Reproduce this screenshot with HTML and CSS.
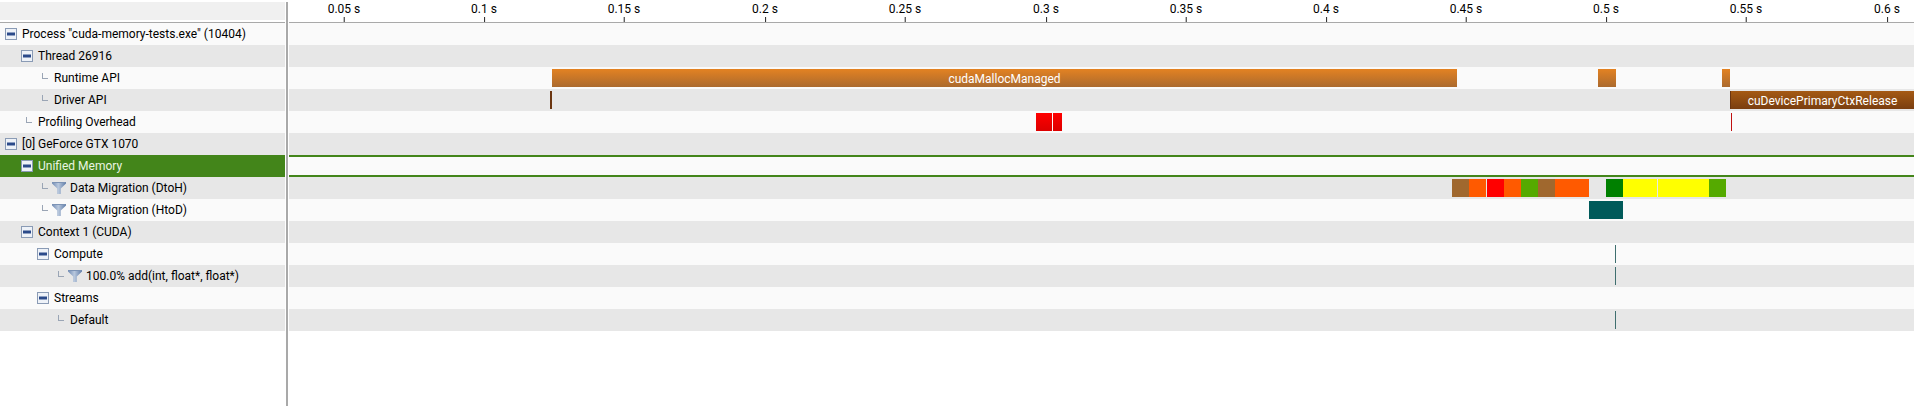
FILE: index.html
```html
<!DOCTYPE html>
<html lang="en">
<head>
<meta charset="utf-8">
<title>Timeline</title>
<link rel="stylesheet" href="styles.css">
</head>
<body>
<svg class="defs" width="0" height="0" aria-hidden="true">
  <defs>
    <linearGradient id="fgrad" x1="0" x2="1" y1="0" y2="0">
      <stop offset="0" stop-color="#6f8ab3"/>
      <stop offset="0.45" stop-color="#b9c8dd"/>
      <stop offset="1" stop-color="#5f7ca8"/>
    </linearGradient>
    <symbol id="minus" viewBox="0 0 12 12">
      <rect x="0.5" y="0.5" width="11" height="11" fill="#eef2f8" stroke="#8a9bb5"/>
      <rect x="2" y="4.5" width="8" height="3" fill="#2b4a8a"/>
    </symbol>
    <symbol id="funnel" viewBox="0 0 14 12">
      <path d="M0 0H14V1.5L8.8 6.5V12H5.2V6.5L0 1.5Z" fill="url(#fgrad)"/>
      <path d="M0.5 0.5H13.5" stroke="#7c93b5" stroke-width="1"/>
    </symbol>
  </defs>
</svg>
<div class="app">
  <div class="side">
    <div class="side-head"><div class="side-fill"></div></div>
    <div class="row odd"><span class="in0"></span><svg class="minus"><use href="#minus"/></svg><span class="lbl">Process "cuda-memory-tests.exe" (10404)</span></div>
    <div class="row even"><span class="in1"></span><svg class="minus"><use href="#minus"/></svg><span class="lbl">Thread 26916</span></div>
    <div class="row odd"><span class="in2"></span><span class="elbow"></span><span class="lbl">Runtime API</span></div>
    <div class="row even"><span class="in2"></span><span class="elbow"></span><span class="lbl">Driver API</span></div>
    <div class="row odd"><span class="in1"></span><span class="elbow"></span><span class="lbl">Profiling Overhead</span></div>
    <div class="row even"><span class="in0"></span><svg class="minus"><use href="#minus"/></svg><span class="lbl">[0] GeForce GTX 1070</span></div>
    <div class="row sel"><span class="in1"></span><svg class="minus"><use href="#minus"/></svg><span class="lbl">Unified Memory</span></div>
    <div class="row even"><span class="in2"></span><span class="elbow"></span><svg class="funnel"><use href="#funnel"/></svg><span class="lbl">Data Migration (DtoH)</span></div>
    <div class="row odd"><span class="in2"></span><span class="elbow"></span><svg class="funnel"><use href="#funnel"/></svg><span class="lbl">Data Migration (HtoD)</span></div>
    <div class="row even"><span class="in1"></span><svg class="minus"><use href="#minus"/></svg><span class="lbl">Context 1 (CUDA)</span></div>
    <div class="row odd"><span class="in2"></span><svg class="minus"><use href="#minus"/></svg><span class="lbl">Compute</span></div>
    <div class="row even"><span class="in3"></span><span class="elbow"></span><svg class="funnel"><use href="#funnel"/></svg><span class="lbl">100.0% add(int, float*, float*)</span></div>
    <div class="row odd"><span class="in2"></span><svg class="minus"><use href="#minus"/></svg><span class="lbl">Streams</span></div>
    <div class="row even"><span class="in3"></span><span class="elbow"></span><span class="lbl">Default</span></div>
  </div>
  <div class="divider"></div>
  <div class="main">
    <div class="ruler">
      <span class="tick" style="left:55px">0.05 s</span>
      <span class="tick" style="left:195px">0.1 s</span>
      <span class="tick" style="left:335px">0.15 s</span>
      <span class="tick" style="left:476px">0.2 s</span>
      <span class="tick" style="left:616px">0.25 s</span>
      <span class="tick" style="left:757px">0.3 s</span>
      <span class="tick" style="left:897px">0.35 s</span>
      <span class="tick" style="left:1037px">0.4 s</span>
      <span class="tick" style="left:1177px">0.45 s</span>
      <span class="tick" style="left:1317px">0.5 s</span>
      <span class="tick" style="left:1457px">0.55 s</span>
      <span class="tick" style="left:1598px">0.6 s</span>
    </div>
    <div class="track odd"></div>
    <div class="track even"></div>
    <div class="track odd">
      <span class="bar api" style="left:263px;width:905px">cudaMallocManaged</span>
      <span class="bar api" style="left:1309px;width:18px"></span>
      <span class="bar api" style="left:1433px;width:8px"></span>
    </div>
    <div class="track even">
      <span class="bar dark" style="left:261px;width:2px"></span>
      <span class="bar drv" style="left:1441px;width:184px">cuDevicePrimaryCtxRelease</span>
    </div>
    <div class="track odd">
      <span class="bar red" style="left:747px;width:16px"></span>
      <span class="bar red" style="left:764px;width:9px"></span>
      <span class="bar thin" style="left:1442px;width:1px"></span>
    </div>
    <div class="track even"></div>
    <div class="track selected"></div>
    <div class="track even">
      <span class="bar c-brown" style="left:1163px;width:17px"></span>
      <span class="bar c-orange" style="left:1180px;width:17px"></span>
      <span class="bar c-red" style="left:1198px;width:17px"></span>
      <span class="bar c-orange" style="left:1215px;width:17px"></span>
      <span class="bar c-lime" style="left:1232px;width:17px"></span>
      <span class="bar c-brown" style="left:1249px;width:17px"></span>
      <span class="bar c-orange" style="left:1266px;width:34px"></span>
      <span class="bar c-green" style="left:1317px;width:17px"></span>
      <span class="bar c-yellow" style="left:1334px;width:34px"></span>
      <span class="bar c-yellow" style="left:1369px;width:51px"></span>
      <span class="bar c-lime" style="left:1420px;width:17px"></span>
    </div>
    <div class="track odd">
      <span class="bar c-teal" style="left:1300px;width:34px"></span>
    </div>
    <div class="track even"></div>
    <div class="track odd"><span class="bar mark" style="left:1326px;width:1px"></span></div>
    <div class="track even"><span class="bar mark" style="left:1326px;width:1px"></span></div>
    <div class="track odd"></div>
    <div class="track even"><span class="bar mark" style="left:1326px;width:1px"></span></div>
  </div>
</div>
</body>
</html>
```
FILE: styles.css
```css
* { box-sizing: border-box; }
html, body { margin: 0; padding: 0; background: #fff; }
body { width: 1917px; height: 406px; overflow: hidden; font-family: "Roboto", "Open Sans", "Liberation Sans", sans-serif; font-size: 12px; color: #000; }
.defs { position: absolute; }
.app { display: flex; height: 406px; }
.side { width: 285px; flex: none; }
.side-head { height: 23px; padding-top: 2px; border-bottom: 1px solid #a9a9a9; }
.side-fill { height: 18px; background: #f0f0f0; }
.divider { width: 4px; flex: none; position: relative; }
.divider::before { content: ""; position: absolute; left: 1px; top: 2px; bottom: 0; width: 2px; background: #a9a9a9; }
.main { width: 1625px; flex: none; }
.row { height: 22px; display: flex; align-items: center; white-space: nowrap; }
.odd { background: #fafafa; }
.even { background: #e7e7e7; }
.sel { background: #43851a; color: #eaf5e2; }
.in0 { width: 5px; flex: none; }
.in1 { width: 21px; flex: none; }
.in2 { width: 37px; flex: none; }
.in3 { width: 53px; flex: none; }
.minus { width: 12px; height: 12px; flex: none; margin-right: 5px; }
.elbow { width: 6px; height: 6px; flex: none; margin: -5px 6px 0 5px; border-left: 1px solid #9aa5b5; border-bottom: 1px solid #9aa5b5; }
.funnel { width: 14px; height: 12px; flex: none; margin: 0 4px 0 -2px; }
.lbl { line-height: 22px; }
.ruler { height: 23px; position: relative; border-bottom: 1px solid #a9a9a9; background: #fff; }
.tick { position: absolute; top: 1px; transform: translateX(-50%); font-size: 12px; line-height: 17px; white-space: nowrap; }
.tick::after { content: ""; position: absolute; left: 50%; top: 16px; width: 1px; height: 5px; background: #222; }
.track { height: 22px; position: relative; }
.selected { background: #fafafa; border-top: 2px solid #43851a; border-bottom: 2px solid #43851a; }
.bar { position: absolute; top: 2px; height: 18px; display: block; text-align: center; color: #fff; font-size: 12px; line-height: 20px; overflow: hidden; white-space: nowrap; }
.api { background: linear-gradient(#e38222, #ab6a2e); }
.drv { background: linear-gradient(#a55a14, #7a3e10); border-left: 1px solid #6b3510; }
.dark { background: #6b3510; }
.red { background: linear-gradient(#ff0000, #dc0000); }
.thin { background: #c01010; }
.mark { background: #3f6f6f; }
.c-brown { background: #a0682e; }
.c-orange { background: #ff5a00; }
.c-red { background: #ff0000; }
.c-lime { background: #55aa00; }
.c-green { background: #008000; }
.c-yellow { background: #ffff00; }
.c-teal { background: #005a5a; }
```
